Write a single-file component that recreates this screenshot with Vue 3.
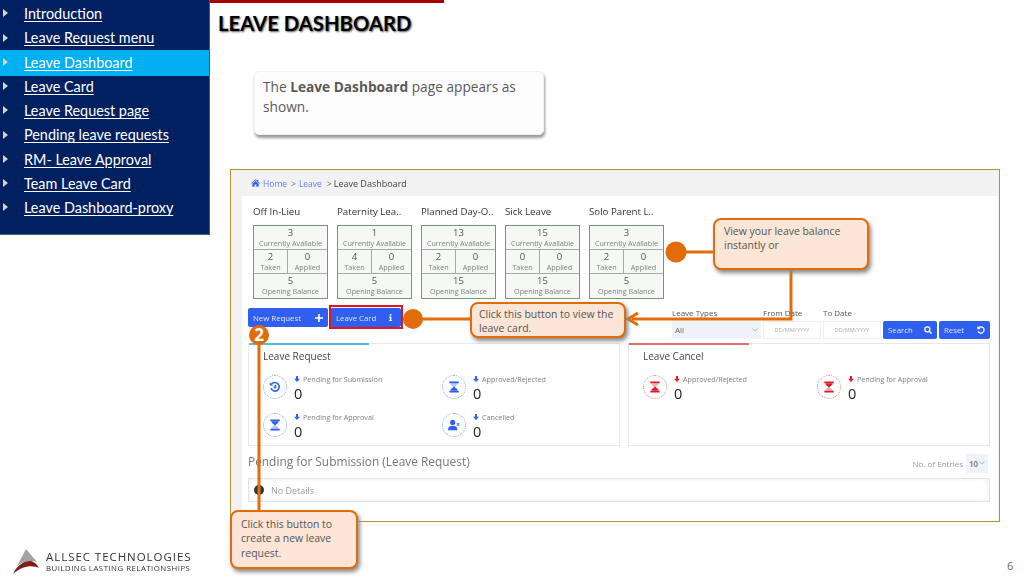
<script setup>
const navItems = ['Introduction', 'Leave Request menu', 'Leave Dashboard', 'Leave Card', 'Leave Request page', 'Pending leave requests', 'RM- Leave Approval', 'Team Leave Card', 'Leave Dashboard-proxy']
const cards = [
  { name: 'Off In-Lieu', avail: 3, taken: 2, applied: 0, open: 5 },
  { name: 'Paternity Lea..', avail: 1, taken: 4, applied: 0, open: 5 },
  { name: 'Planned Day-O..', avail: 13, taken: 2, applied: 0, open: 15 },
  { name: 'Sick Leave', avail: 15, taken: 0, applied: 0, open: 15 },
  { name: 'Solo Parent L..', avail: 3, taken: 2, applied: 0, open: 5 }
]
const requestStats = [
  { label: 'Pending for Submission', icon: 'history' },
  { label: 'Approved/Rejected', icon: 'hourEnd' },
  { label: 'Pending for Approval', icon: 'hourHalf' },
  { label: 'Cancelled', icon: 'user' }
]
const cancelStats = [
  { label: 'Approved/Rejected', icon: 'hourEnd' },
  { label: 'Pending for Approval', icon: 'hourHalf' }
]
</script>

<template>
  <div class="page">
    <nav class="nav">
      <a v-for="item in navItems" :key="item" class="nav-item" :class="{ active: item === 'Leave Dashboard' }">
        <i class="tri"></i><span>{{ item }}</span>
      </a>
    </nav>

    <main class="main">
      <div class="redbar"></div>
      <h1 class="title">LEAVE DASHBOARD</h1>
      <div class="note">The <b>Leave Dashboard</b> page appears as shown.</div>

      <section class="frame">
        <div class="crumbs">
          <svg class="home" viewBox="0 0 12 10"><path d="M6 0 0 5.2l.7.7L6 1.4l5.300 4.500.7-.7L9.800 3.300V.6H8.300v1.400zM1.800 6v4h3V7h2.400v3h3V6L6 2.300z" /></svg>
          <a>Home</a><em>&gt;</em><a>Leave</a><em class="wide">&gt;</em><span class="here">Leave Dashboard</span>
        </div>
        <div class="panel">
          <div class="cards">
            <div v-for="c in cards" :key="c.name" class="card-col">
              <div class="card-name">{{ c.name }}</div>
              <div class="card">
                <div class="cell full"><b>{{ c.avail }}</b><small>Currently Available</small></div>
                <div class="cell"><b>{{ c.taken }}</b><small>Taken</small></div>
                <div class="cell"><b>{{ c.applied }}</b><small>Applied</small></div>
                <div class="cell full"><b>{{ c.open }}</b><small>Opening Balance</small></div>
              </div>
            </div>
          </div>

          <div class="toolbar">
            <button class="btn new">New Request
              <svg viewBox="0 0 10 10"><path d="M4 0h2v4h4v2H6v4H4V6H0V4h4z" /></svg>
            </button>
            <div class="outline">
              <button class="btn lc">Leave Card
                <svg viewBox="0 0 10 10"><path d="M3.800 0h2.400v2.200H3.800zM3 3.500h3.200V8.500H7.200V10H3V8.500H4V5H3z" /></svg>
              </button>
            </div>
            <div class="filters">
              <label class="fld sel-f"><span>Leave Types</span><div class="select">All<svg viewBox="0 0 8 5"><path d="M.5.5 4 4 7.500.5" /></svg></div></label>
              <label class="fld date-f"><span>From Date</span><div class="date">DD/MM/YYYY</div></label>
              <label class="fld date-f"><span>To Date</span><div class="date">DD/MM/YYYY</div></label>
              <button class="btn search">Search
                <svg viewBox="0 0 10 10"><circle cx="4.200" cy="4.200" r="3.200" /><path d="m6.500 6.500 3 3" /></svg>
              </button>
              <button class="btn reset">Reset
                <svg viewBox="0 0 10 10"><path d="M2 2.300A3.900 3.900 0 1 1 1.300 6.500M1.200 .6v2.700h2.700" /></svg>
              </button>
            </div>
          </div>

          <div class="stats-row">
            <div class="stat-panel req">
              <h3>Leave Request</h3>
              <div class="stat-grid">
                <div v-for="s in requestStats" :key="s.label" class="stat">
                  <div class="ring">
                    <svg viewBox="0 0 14 14">
                      <template v-if="s.icon === 'history'">
                        <path class="ln" d="M3 3.600A5 5 0 1 1 2.200 8.500" /><path d="M.8 1.500 5 5.300H1z" /><path class="ln" d="M7.500 4.500v3H5.500" />
                      </template>
                      <template v-else-if="s.icon === 'user'">
                        <circle cx="5.500" cy="4" r="3" /><path d="M0 13c0-3.500 2-5 5.500-5s5.500 1.500 5.500 5zM10.500 4.500l1.200 1.100 1.200-1.100.6.600-1.200 1.200 1.200 1.200-.6.600-1.200-1.200-1.200 1.200-.6-.6 1.200-1.200-1.200-1.200z" />
                      </template>
                      <template v-else>
                        <path d="M1.500.5h11v2h-11zM1.500 11.500h11v2h-11z" />
                        <path :class="{ pale: s.icon === 'hourEnd' }" d="M3 2.500h8V4L7 7.500 3 4z" />
                        <path :class="{ pale: s.icon === 'hourHalf' }" d="M7 6.500 11 10v1.500H3V10z" />
                      </template>
                    </svg>
                  </div>
                  <div class="stat-text">
                    <div class="lab"><svg viewBox="0 0 8 8"><path d="M2.700 0h2.600v3.700H8L4 8 0 3.700h2.700z" /></svg>{{ s.label }}</div>
                    <div class="val">0</div>
                  </div>
                </div>
              </div>
            </div>
            <div class="stat-panel can">
              <h3>Leave Cancel</h3>
              <div class="stat-grid">
                <div v-for="s in cancelStats" :key="s.label" class="stat">
                  <div class="ring">
                    <svg viewBox="0 0 14 14">
                      <path d="M1.500.5h11v2h-11zM1.500 11.500h11v2h-11z" />
                      <path :class="{ pale: s.icon === 'hourEnd' }" d="M3 2.500h8V4L7 7.500 3 4z" />
                      <path :class="{ pale: s.icon === 'hourHalf' }" d="M7 6.500 11 10v1.500H3V10z" />
                    </svg>
                  </div>
                  <div class="stat-text">
                    <div class="lab"><svg viewBox="0 0 8 8"><path d="M2.700 0h2.600v3.700H8L4 8 0 3.700h2.700z" /></svg>{{ s.label }}</div>
                    <div class="val">0</div>
                  </div>
                </div>
              </div>
            </div>
          </div>

          <div class="list-head">
            <h2>Pending for Submission (Leave Request)</h2>
            <div class="entries">No. of Entries <div class="ent-sel">10<svg viewBox="0 0 8 5"><path d="M.5.5 4 4 7.500.5" /></svg></div></div>
          </div>
          <div class="nodetails"><i class="dot"></i>No Details</div>
        </div>
      </section>
    </main>

    <svg class="wires" viewBox="0 0 1025 582">
      <circle cx="676" cy="252" r="10.500" />
      <circle cx="413" cy="319" r="10" />
      <path class="w" d="M680 252H716M791 266V319H632M420 319H472M259 340V512" />
      <path class="w arrow" d="M638 313 628 319 638 325" />
    </svg>
    <div class="badge">2</div>
    <div class="red-box"></div>

    <div class="callout c1">View your leave balance instantly or</div>
    <div class="callout c2">Click this button to view the leave card.</div>
    <div class="callout c3">Click this button to create a new leave request.</div>

    <footer class="logo">
      <svg viewBox="0 0 26 26" class="mark">
        <path fill="#a3a3a3" d="M13 1 24 14C18 12 10 13 4 18z" />
        <path fill="#7f1d1d" d="M0 26C4 17 11 13 17 13c3 0 6 2 9 7-6-3-16-3-26 6z" />
      </svg>
      <div class="logo-text">
        <div class="l1">ALLSEC TECHNOLOGIES</div>
        <div class="l2">BUILDING LASTING RELATIONSHIPS</div>
      </div>
    </footer>
    <div class="pageno">6</div>
  </div>
</template>

<style>
html, body { background: #fff; }
</style>

<style scoped>
.page { position: relative; width: 1025px; height: 582px; overflow: hidden; display: flex; align-items: flex-start; background: #fff; font-family: "Open Sans", sans-serif; }

.nav { width: 210px; height: 235px; box-sizing: border-box; flex: none; background: #002060; border-right: 1px solid #2e6090; border-bottom: 1px solid #2e6090; padding-top: 2.300px; display: flex; flex-direction: column; }
.nav-item { height: 24.25px; flex: none; display: flex; align-items: center; padding-left: 24px; position: relative; color: #fff; font: 14.400px/1 "Lato", sans-serif; text-decoration: underline; text-underline-offset: 2px; }
.nav-item.active { background: #00b0f0; height: 26px; margin: 0 0 -1.750px; top: -.9px; }
.tri { position: absolute; left: 3px; top: 50%; margin-top: -5px; border-left: 5px solid #d9d4c8; border-top: 4.500px solid transparent; border-bottom: 4.500px solid transparent; }

.main { flex: 1; display: flex; flex-direction: column; align-items: flex-start; }
.redbar { width: 234px; height: 3px; background: #a80000; }
.title { margin: 8px 0 0 8px; font: 700 20.300px/24px "Lato", sans-serif; color: #000; text-shadow: 1px 1px 2px #555; height: 24px; }
.note { margin: 36px 0 0 44px; width: 290px; height: 64px; box-sizing: border-box; padding: 5px 8px; background: #fdfdfd; border-radius: 5px; border: 1px solid #f0f0f0; box-shadow: 1px 3px 3px #999; color: #595959; font: 13.700px/20px "Open Sans", sans-serif; }
.note b { font-weight: 700; }

.frame { margin: 34px 0 0 20px; width: 770px; height: 353px; box-sizing: border-box; background: #f2f2f2; border: 1px solid #b8922d; display: flex; flex-direction: column; filter: blur(.3px); }
.crumbs { height: 26px; flex: none; box-sizing: border-box; display: flex; align-items: center; padding: 0 0 0 20px; font-size: 8.500px; color: #444; }
.crumbs a { color: #6a80f0; }
.crumbs em { font-style: normal; margin: 0 3px 0 4px; color: #666; }
.crumbs em.wide { margin: 0 2px 0 5px; }
.crumbs .here { font-size: 9px; padding-top: 1px; }
.home { width: 9px; height: 8px; fill: #3560ee; margin-right: 3px; }

.panel { flex: 1; margin: 0 1px 0 11px; background: #fff; padding: 0 8px 0 6px; }
.cards { display: flex; gap: 9px; padding: 9px 0 0 5px; }
.card-col { width: 75px; }
.card-name { height: 20px; font-size: 9.700px; line-height: 14px; color: #333; white-space: nowrap; }
.card { display: grid; grid-template-columns: 34px 1fr; grid-template-rows: repeat(3, 1fr); height: 74px; box-sizing: border-box; border: 1.500px solid #6e9a70; background: #f5f8f4; }
.cell { display: flex; flex-direction: column; align-items: center; justify-content: flex-start; padding-top: 2px; border-bottom: 1px solid #9fb09f; }
.cell:nth-child(2) { border-right: 1px solid #9fb09f; }
.cell:last-child { border-bottom: 0; }
.cell.full { grid-column: 1 / 3; }
.cell b { font-weight: 400; font-size: 9.500px; line-height: 10.500px; color: #555; }
.cell small { font-size: 7.200px; line-height: 9px; color: #808080; white-space: nowrap; }

.toolbar { display: flex; align-items: flex-end; margin-top: 6px; height: 34px; position: relative; }
.btn { border: 0; border-radius: 2px; background: #2f5fef; color: #dfe6ff; font: 7.800px "Open Sans", sans-serif; display: flex; align-items: center; justify-content: space-between; box-sizing: border-box; padding: 0 5px; }
.btn svg { width: 8px; height: 8px; fill: #fff; flex: none; }
.btn.new { width: 80px; height: 19px; margin-bottom: 12px; }
.outline { width: 74px; margin: 0 0 10px 1px; height: 24px; box-sizing: border-box; padding: 3px 1px 0 1px; }
.btn.lc { width: 71px; height: 19px; padding: 0 7px 0 6px; }
.btn.lc svg { width: 7px; height: 7px; }
.filters { margin-left: auto; display: flex; align-items: flex-end; gap: 2px; }
.fld { display: flex; flex-direction: column; font-size: 8px; color: #555; }
.fld span { height: 12px; line-height: 8px; white-space: nowrap; }
.select { width: 89px; height: 18px; box-sizing: border-box; background: #eef3fa; color: #666; padding-left: 3px; font-size: 8px; line-height: 18px; display: flex; justify-content: space-between; align-items: center; padding-right: 3px; }
.select svg, .ent-sel svg { width: 6px; height: 4px; fill: none; stroke: #999; stroke-width: 1; }
.date { width: 58px; height: 18px; box-sizing: border-box; background: #fff; border: 1px solid #eee; color: #aab; font-size: 5.600px; line-height: 16px; text-align: center; }
.btn.search, .btn.reset { height: 18px; }
.btn.search { width: 54px; }
.btn.reset { width: 51px; }
.search svg, .reset svg { fill: none; stroke: #fff; stroke-width: 1.600; }

.stats-row { display: flex; gap: 8px; margin-top: 4px; height: 103px; }
.stat-panel { position: relative; box-sizing: border-box; border: 1px solid #e8e8e8; padding: 5px 0 0 14px; }
.stat-panel::before { content: ""; position: absolute; left: 0; top: -1px; width: 120px; height: 1.500px; background: #4dbde0; }
.req { width: 372px; }
.can { width: 362px; }
.can::before { background: #e07070; }
h3 { margin: 0; font-weight: 400; font-size: 10px; line-height: 14px; color: #444; }
.stat-grid { display: grid; grid-template-columns: 179px 1fr; grid-auto-rows: 38px; margin-top: 9px; }
.can .stat-grid { grid-template-columns: 174px 1fr; }
.stat { display: flex; align-items: flex-start; }
.ring { width: 24px; height: 24px; box-sizing: border-box; border-radius: 50%; border: 1px dotted #8ea3f5; display: flex; align-items: center; justify-content: center; flex: none; margin: 3px 7px 0 0; }
.ring svg { width: 12px; height: 12px; fill: #2f5fef; }
.ring .ln { fill: none; stroke: #2f5fef; stroke-width: 1.900; }
.ring .pale { opacity: .35; }
.stat-text { margin-top: 2px; }
.lab { display: flex; align-items: center; gap: 3px; font-size: 7.200px; line-height: 10px; color: #808080; white-space: nowrap; }
.lab svg { width: 6px; height: 6px; fill: #2f5fef; }
.val { font-size: 14.500px; line-height: 20px; color: #222; }
.can .ring { border-color: #e88a8a; }
.can .ring svg, .can .lab svg { fill: #d81e24; }

.list-head { display: flex; justify-content: space-between; align-items: center; height: 32px; }
h2 { margin: 0 0 3px; font-weight: 400; font-size: 11.900px; color: #777; }
.entries { display: flex; align-items: center; gap: 3px; font-size: 8px; color: #999; margin: 2px 2px 0 0; }
.ent-sel { width: 22px; height: 19px; background: #eef3fa; font-weight: 700; color: #888; display: flex; align-items: center; justify-content: center; gap: 1px; }
.nodetails { height: 24px; box-sizing: border-box; border: 1px solid #e4e4e4; box-shadow: inset 0 0 5px #eee; display: flex; align-items: center; padding-left: 5px; font-size: 9px; color: #999; }
.dot { width: 10px; height: 10px; border-radius: 50%; background: #333; margin-right: 7px; }

.wires { position: absolute; inset: 0; width: 1025px; height: 582px; pointer-events: none; }
.wires circle { fill: #e36c0a; }
.w { fill: none; stroke: #e36c0a; stroke-width: 3; }
.badge { position: absolute; left: 249px; top: 325px; width: 20px; height: 20px; border-radius: 50%; background: #e36c0a; color: #fff; font: 700 17px/20px "Open Sans", sans-serif; text-align: center; }
.red-box { position: absolute; left: 329px; top: 305px; width: 74px; height: 24px; box-sizing: border-box; border: 2px solid #e3121f; }

.callout { position: absolute; box-sizing: border-box; background: #fbe5d6; border: 2px solid #e36c0a; border-radius: 8px; box-shadow: 2px 3px 4px #888; color: #555; font: 10.450px/14.300px "Open Sans", sans-serif; }
.c1 { left: 713px; top: 218px; width: 156px; height: 52px; padding: 4px 9px; }
.c2 { left: 470px; top: 302px; width: 156px; height: 36px; padding: 3px 7px; }
.c3 { left: 230px; top: 510px; width: 128px; height: 59px; padding: 5px 9px; }

.logo { position: absolute; left: 13px; top: 548px; display: flex; align-items: center; gap: 7px; filter: blur(.3px); }
.mark { width: 26px; height: 26px; }
.logo-text { color: #333; white-space: nowrap; }
.l1 { font: 400 11.500px/13px "Open Sans", sans-serif; letter-spacing: .95px; }
.l2 { font: 400 7.800px/10px "Open Sans", sans-serif; letter-spacing: .5px; }
.pageno { position: absolute; left: 1007px; top: 558px; font: 11px/16px "Open Sans", sans-serif; color: #666; }
</style>
